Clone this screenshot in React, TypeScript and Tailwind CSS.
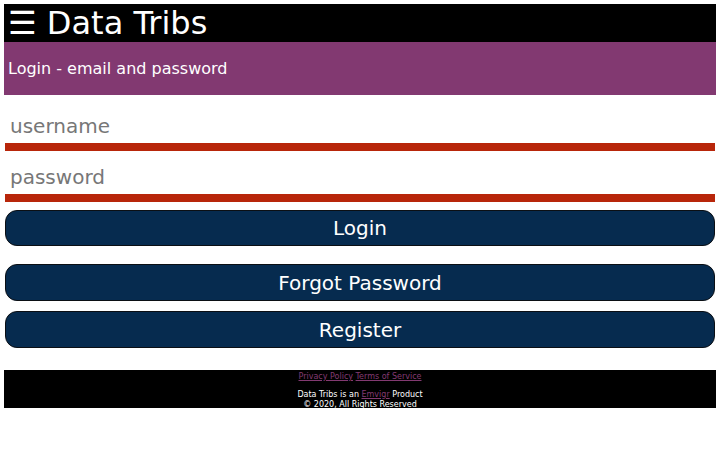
import React from "react";

export default function App() {
  return (
    <div className="p-1 font-['DejaVu_Sans',sans-serif] bg-white min-h-[450px]">
      <div className="bg-black h-[38px] text-white text-[32px] leading-[38px] pl-[4px] whitespace-nowrap">
        ☰ Data Tribs
      </div>
      <div className="bg-[#823971] h-[53px] flex items-center pl-[4px] text-white text-[16px]">
        Login - email and password
      </div>
      <div className="mt-[5px] mx-px">
        <div className="h-[51px] border-b-8 border-[#b8260a] pt-[8px] box-border">
          <input
            className="w-full h-[35px] pl-[5px] text-[20px] outline-none bg-transparent placeholder:text-[#777777] font-['DejaVu_Sans',sans-serif]"
            placeholder="username"
          />
        </div>
        <div className="h-[51px] border-b-8 border-[#b8260a] pt-[8px] box-border">
          <input
            type="password"
            className="w-full h-[35px] pl-[5px] text-[20px] outline-none bg-transparent placeholder:text-[#777777] font-['DejaVu_Sans',sans-serif]"
            placeholder="password"
          />
        </div>
        <button className="mt-[8px] w-full h-[36px] rounded-[12px] bg-[#062b4f] border border-[#0b0f14] text-white text-[20px] flex items-center justify-center font-['DejaVu_Sans',sans-serif]">
          Login
        </button>
        <button className="mt-[18px] w-full h-[37px] rounded-[12px] bg-[#062b4f] border border-[#0b0f14] text-white text-[20px] flex items-center justify-center font-['DejaVu_Sans',sans-serif]">
          Forgot Password
        </button>
        <button className="mt-[10px] w-full h-[37px] rounded-[12px] bg-[#062b4f] border border-[#0b0f14] text-white text-[20px] flex items-center justify-center font-['DejaVu_Sans',sans-serif]">
          Register
        </button>
      </div>
      <div className="mt-[22px] bg-black h-[38px] text-white text-[8px] leading-[10px] text-center pt-[2px] box-border">
        <div>
          <a href="#" className="text-[#833a72] underline">Privacy Policy</a>{" "}
          <a href="#" className="text-[#833a72] underline">Terms of Service</a>
        </div>
        <div className="mt-[8px]">
          Data Tribs is an <a href="#" className="text-[#833a72] underline">Emvigr</a> Product
        </div>
        <div>© 2020, All Rights Reserved</div>
      </div>
    </div>
  );
}
